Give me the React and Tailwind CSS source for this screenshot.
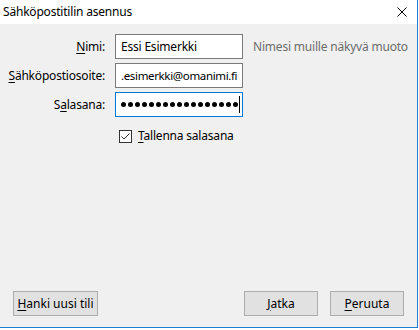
import React from 'react';

const font = { fontFamily: '"Segoe UI", "Noto Sans", sans-serif' };

const Key = ({ children }) => <span className="underline underline-offset-2">{children}</span>;

const Field = ({ focused, children }) => (
  <div
    className={`flex h-[25px] w-[128px] items-center overflow-hidden bg-white pl-[5px] border ${
      focused ? 'border-[#0078d7]' : 'border-[#7a7a7a]'
    }`}
  >
    {children}
  </div>
);

const Button = ({ children, className = '' }) => (
  <button
    type="button"
    className={`flex h-[25px] items-center justify-center border border-[#adadad] bg-[#e1e1e1] text-[12px] text-black ${className}`}
  >
    {children}
  </button>
);

const dots = Array.from({ length: 17 });

export default function App() {
  return (
    <div className="h-[330px] w-[419px] bg-white text-black" style={font}>
      <div className="flex h-[328px] w-[418px] flex-col border-r border-b border-[#1c7fd4] bg-[#f0f0f0]">
        {/* otsikkopalkki */}
        <div className="flex h-[24px] items-center justify-between bg-white pl-[3px] pr-[10px]">
          <span className="text-[12px] tracking-[-0.2px]">Sähköpostitilin asennus</span>
          <svg width="10" height="10" viewBox="0 0 10 10">
            <path d="M0.5 0.5 L9.5 9.5 M9.5 0.5 L0.5 9.5" stroke="#000" strokeWidth="1" />
          </svg>
        </div>

        {/* lomake */}
        <div className="mt-[10px] grid grid-cols-[105px_128px_1fr] items-center gap-x-[10px] gap-y-[4px] text-[12px] tracking-[-0.2px]">
          <label className="text-right"><Key>N</Key>imi:</label>
          <Field>
            <span>Essi Esimerkki</span>
          </Field>
          <span className="text-[#6d6d6d]">Nimesi muille näkyvä muoto</span>

          <label className="text-right"><Key>S</Key>ähköpostiosoite:</label>
          <Field>
            <span className="whitespace-nowrap text-[11.5px] tracking-[-0.35px]">.esimerkki@omanimi.fi</span>
          </Field>
          <span />

          <label className="text-right">S<Key>a</Key>lasana:</label>
          <Field focused>
            <div className="flex items-center gap-[2px]">
              {dots.map((_, i) => (
                <span key={i} className="h-[5px] w-[5px] rounded-full bg-black" />
              ))}
            </div>
            <span className="ml-[1px] h-[17px] w-px bg-black" />
          </Field>
          <span />
        </div>

        <div className="ml-[119px] mt-[10px] flex items-center gap-[6px] text-[12px] tracking-[-0.2px]">
          <span className="flex h-[13px] w-[13px] items-center justify-center border border-[#333] bg-white">
            <svg width="11" height="11" viewBox="0 0 11 11">
              <path d="M1.5 5.5 L4 8 L9.5 2.5" fill="none" stroke="#333" strokeWidth="1" />
            </svg>
          </span>
          <span><Key>T</Key>allenna salasana</span>
        </div>

        <div className="flex-1" />

        {/* painikkeet */}
        <div className="mb-[11px] flex items-center px-[13px]">
          <Button className="w-[85px]"><Key>H</Key>anki uusi tili</Button>
          <div className="flex-1" />
          <Button className="w-[74px]"><Key>J</Key>atka</Button>
          <Button className="ml-[12px] w-[74px]"><Key>P</Key>eruuta</Button>
        </div>
      </div>
    </div>
  );
}
